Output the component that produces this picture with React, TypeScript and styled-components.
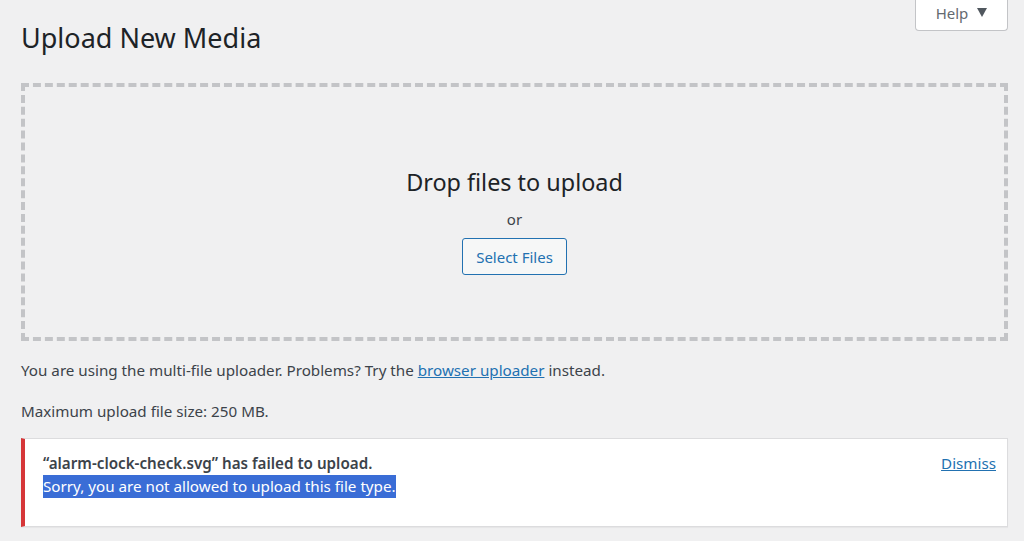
import React from 'react'
import styled, { createGlobalStyle } from 'styled-components'

const GlobalStyle = createGlobalStyle`
  html, body {
    margin: 0;
    padding: 0;
    background: #f0f0f1;
    font-family: 'Noto Sans', 'Open Sans', sans-serif;
    color: #3c434a;
  }
`

const Page = styled.div`
  position: relative;
  padding: 0 16px 0 21px;
  width: 1024px;
  height: 541px;
  box-sizing: border-box;
  overflow: hidden;
`

const HelpTab = styled.button`
  position: absolute;
  top: 0;
  right: 16px;
  width: 93px;
  height: 31px;
  display: flex;
  align-items: center;
  justify-content: center;
  gap: 9px;
  background: #fff;
  border: 1px solid #c3c4c7;
  border-top: 0;
  border-radius: 0 0 4px 4px;
  font-family: inherit;
  font-size: 15px;
  color: #646970;
  padding: 0 0 5px 0;
  cursor: pointer;
`

const Caret = styled.span`
  width: 0;
  height: 0;
  border-left: 5px solid transparent;
  border-right: 5px solid transparent;
  border-top: 9px solid #50575e;
  margin-top: -1px;
`

const Title = styled.h1`
  margin: 0;
  padding: 20px 0 0 0;
  font-size: 27px;
  font-weight: 400;
  line-height: 36px;
  color: #1d2327;
`

const DropZone = styled.div`
  margin-top: 27px;
  height: 258px;
  box-sizing: border-box;
  border: 4px dashed #c3c4c7;
  display: flex;
  flex-direction: column;
  align-items: center;
  justify-content: center;
  padding-top: 18px;
`

const DropTitle = styled.div`
  font-size: 23.4px;
  color: #1d2327;
  line-height: 30px;
`

const Or = styled.div`
  font-size: 15px;
  color: #3c434a;
  line-height: 22px;
  margin: 11px 0 8px;
`

const SelectButton = styled.button`
  height: 37px;
  padding: 0 13px;
  border: 1px solid #2271b1;
  border-radius: 3px;
  background: #f6f7f7;
  color: #2271b1;
  font-family: inherit;
  font-size: 15px;
  cursor: pointer;
`

const Note = styled.p<{ $top: number }>`
  margin: 0;
  font-size: 15.2px;
  line-height: 20px;
  color: #3c434a;
  margin-top: ${(p) => p.$top}px;
`

const Link = styled.a`
  color: #2271b1;
  text-decoration: underline;
`

const Notice = styled.div`
  margin-top: 17px;
  height: 89px;
  box-sizing: border-box;
  background: #fff;
  border: 1px solid #dcdcde;
  border-left: 4px solid #d63638;
  box-shadow: 0 1px 1px rgba(0, 0, 0, 0.04);
  display: flex;
  justify-content: space-between;
  padding: 13px 11px 0 18px;
`

const NoticeText = styled.div`
  font-size: 15.2px;
  line-height: 23px;
`

const FileLine = styled.div`
  font-weight: 600;
  color: #3c434a;
`

const Selected = styled.span`
  display: inline-block;
  line-height: 23px;
  background: #3a6dd6;
  color: #fff;
`

const Dismiss = styled.a`
  font-size: 15.2px;
  line-height: 23px;
  color: #2271b1;
  text-decoration: underline;
`

export default function App() {
  return (
    <>
      <GlobalStyle />
      <Page>
        <HelpTab>
          Help <Caret />
        </HelpTab>
        <Title>Upload New Media</Title>
        <DropZone>
          <DropTitle>Drop files to upload</DropTitle>
          <Or>or</Or>
          <SelectButton>Select Files</SelectButton>
        </DropZone>
        <Note $top={19}>
          You are using the multi-file uploader. Problems? Try the{' '}
          <Link href="#">browser uploader</Link> instead.
        </Note>
        <Note $top={21}>Maximum upload file size: 250 MB.</Note>
        <Notice>
          <NoticeText>
            <FileLine>“alarm-clock-check.svg” has failed to upload.</FileLine>
            <Selected>Sorry, you are not allowed to upload this file type.</Selected>
          </NoticeText>
          <Dismiss href="#">Dismiss</Dismiss>
        </Notice>
      </Page>
    </>
  )
}
